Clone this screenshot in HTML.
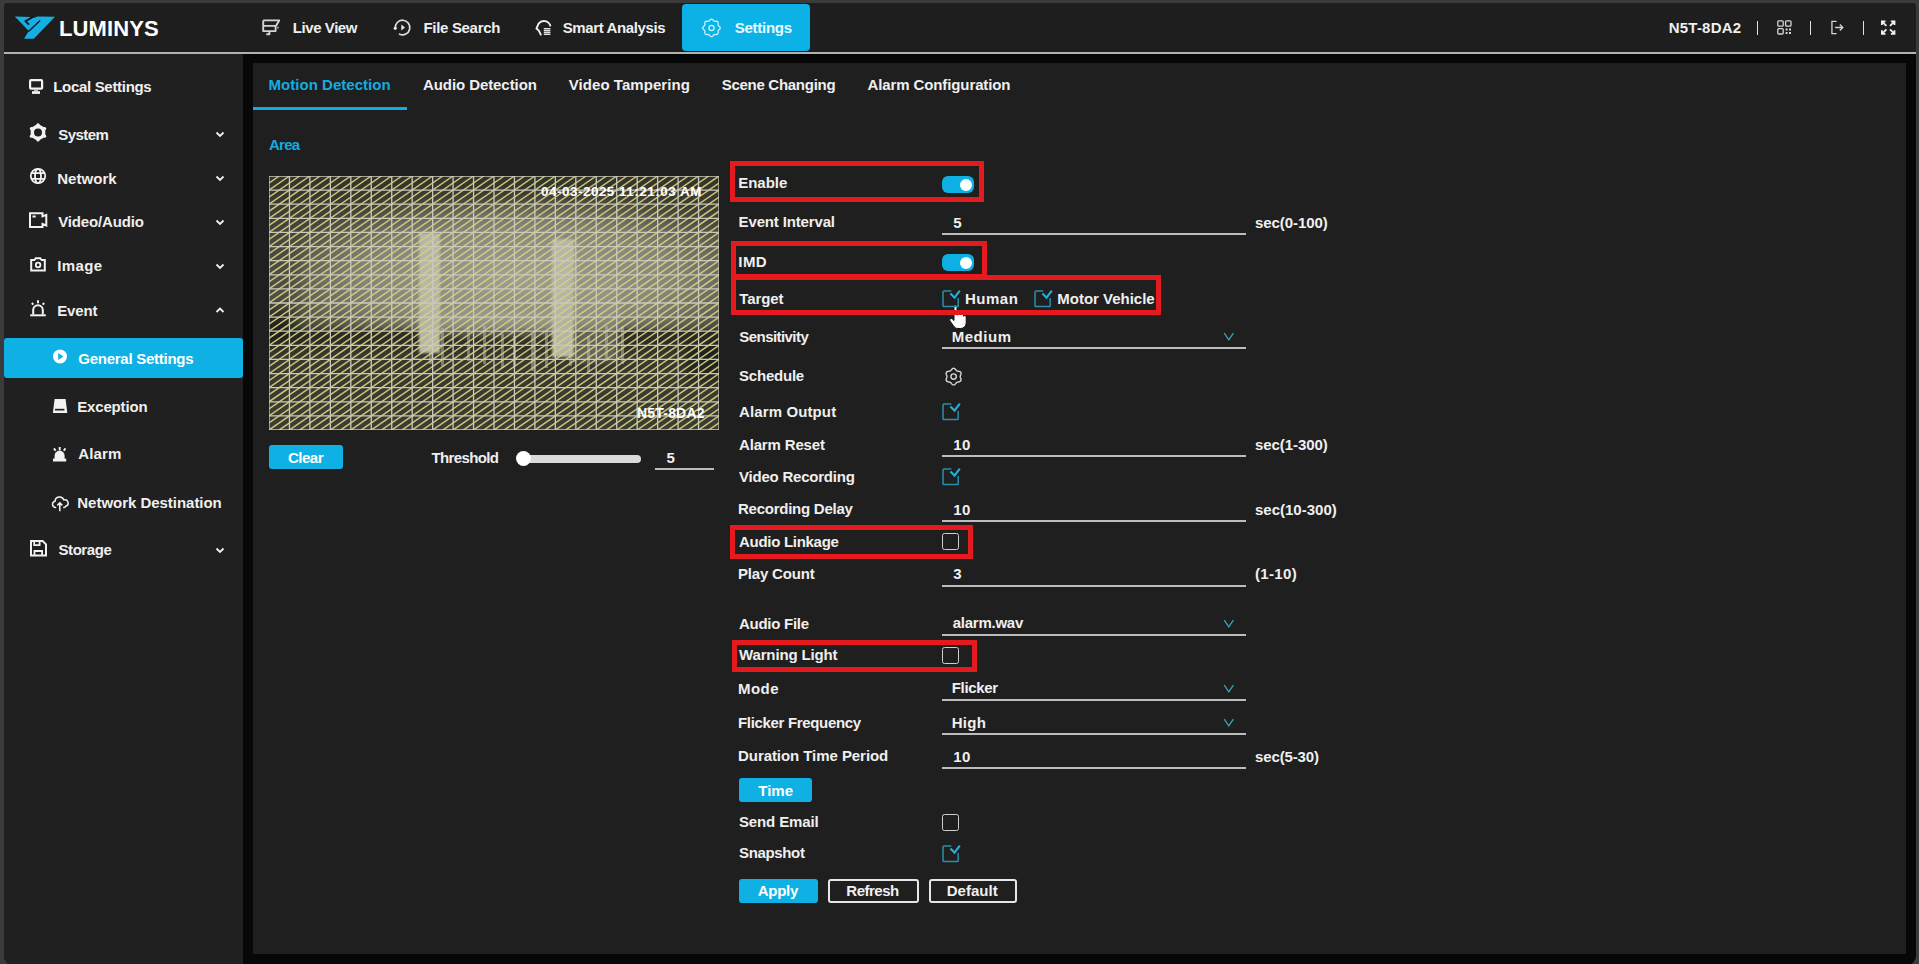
<!DOCTYPE html>
<html><head><meta charset="utf-8"><title>Settings</title>
<style>
html,body{margin:0;padding:0;}
body{width:1919px;height:964px;overflow:hidden;position:relative;background:#3b3b3b;font-family:"Liberation Sans",sans-serif;font-weight:bold;}
.a{position:absolute;box-sizing:border-box;}
.t{position:absolute;white-space:nowrap;font-weight:bold;}
.frame{left:4px;top:2.5px;width:1912px;height:962.5px;background:#070707;border-radius:4px 4px 9px 9px;overflow:hidden;}
.hdr{left:4px;top:2.5px;width:1912px;height:49.5px;background:#1e1e1e;border-radius:4px 4px 0 0;}
.hline{left:4px;top:52px;width:1912px;height:2px;background:#b2b2b2;}
.side{left:4px;top:54px;width:239px;height:911px;background:#202020;border-radius:0 0 0 9px;}
.panel{left:253px;top:62.5px;width:1653px;height:891.5px;background:#1f1f1f;}
.red{border:5.2px solid #e51a1e;}
.uline{height:2px;background:#bdbdbd;}
.cb{width:16.5px;height:16.5px;border:1.6px solid #cfcfcf;border-radius:2.5px;}
.btn{background:#0fb1e4;border-radius:3px;}
.obtn{border:2px solid #e6e6e6;border-radius:3px;}
.tog{width:32px;height:17px;border-radius:6px;background:#0db0e3;}
.tog:after{content:"";position:absolute;right:2px;top:2.5px;width:12px;height:12px;border-radius:50%;background:#fbffff;}
svg{position:absolute;overflow:visible;}
</style></head><body>
<div class="a frame"></div>
<div class="a hdr"></div>
<div class="a hline"></div>
<div class="a side"></div>
<div class="a panel"></div>
<!-- logo -->
<svg style="left:0;top:0" width="60" height="45" viewBox="0 0 60 45">
<polygon points="14.8,16.4 31.6,17.0 33.6,18.0 37.5,16.4 55,16.7 33.8,38.8 24.1,38.8 28.8,31.0" fill="#15b0e3"/>
<polyline points="33.3,16.6 25.6,21.3 28.9,24.6" stroke="#0c1a22" stroke-width="1.9" fill="none"/>
<polyline points="40.2,20.5 28.2,31.8" stroke="#0a1e2a" stroke-width="1.5" fill="none"/>
</svg>
<!-- settings button -->
<div class="a btn" style="left:682px;top:4px;width:128px;height:47px;border-radius:4px;background:#0cb2e5"></div>
<!-- header icons -->
<svg style="left:0;top:0" width="600" height="50" viewBox="0 0 600 50" fill="none">
<path d="M263.2 20.4H279.2L275.9 25.9H263.2M263.2 20.4V31.1H275.6V25.9M269.4 31.1V34.2H266.3" stroke="#d4d4d4" stroke-width="1.9" stroke-linejoin="round"/>
<circle cx="278" cy="27.7" r="1.1" fill="#8a8a8a"/>
<path d="M395.3 28.4A7.3 7.3 0 1 1 399.6 34.2" stroke="#dedede" stroke-width="1.7" stroke-linecap="round"/>
<circle cx="395.2" cy="28.3" r="1.5" fill="#f0f0f0"/>
<path d="M401.3 24.6V30.6L405 27.6z" fill="#e6e6e6"/>
<path d="M540.8 34.6L538.8 30.6 536.4 28.6 538.6 23.6A6.8 6.8 0 0 1 550.3 25.6" stroke="#f0f0f0" stroke-width="1.9" stroke-linejoin="round" stroke-linecap="round"/>
<path d="M543.8 28.7h6.6M543.8 30.6h6.6M543.8 32.4h6.6M543.8 34.2h6.6" stroke="#e2e2e2" stroke-width="1.4"/>
</svg>
<svg style="left:0;top:0" width="800" height="50" viewBox="0 0 800 50" fill="none" stroke="#c6f2ff">
<path d="M711.50,19.15 L712.07,19.27 L712.59,19.60 L713.06,20.05 L713.47,20.53 L713.86,20.94 L714.27,21.20 L714.75,21.31 L715.31,21.30 L715.94,21.25 L716.60,21.26 L717.20,21.40 L717.69,21.71 L718.00,22.20 L718.14,22.80 L718.15,23.46 L718.10,24.09 L718.09,24.65 L718.20,25.13 L718.46,25.54 L718.87,25.93 L719.35,26.34 L719.80,26.81 L720.13,27.33 L720.25,27.90 L720.13,28.47 L719.80,28.99 L719.35,29.46 L718.87,29.87 L718.46,30.26 L718.20,30.67 L718.09,31.15 L718.10,31.71 L718.15,32.34 L718.14,33.00 L718.00,33.60 L717.69,34.09 L717.20,34.40 L716.60,34.54 L715.94,34.55 L715.31,34.50 L714.75,34.49 L714.27,34.60 L713.86,34.86 L713.47,35.27 L713.06,35.75 L712.59,36.20 L712.07,36.53 L711.50,36.65 L710.93,36.53 L710.41,36.20 L709.94,35.75 L709.53,35.27 L709.14,34.86 L708.73,34.60 L708.25,34.49 L707.69,34.50 L707.06,34.55 L706.40,34.54 L705.80,34.40 L705.31,34.09 L705.00,33.60 L704.86,33.00 L704.85,32.34 L704.90,31.71 L704.91,31.15 L704.80,30.67 L704.54,30.26 L704.13,29.87 L703.65,29.46 L703.20,28.99 L702.87,28.47 L702.75,27.90 L702.87,27.33 L703.20,26.81 L703.65,26.34 L704.13,25.93 L704.54,25.54 L704.80,25.13 L704.91,24.65 L704.90,24.09 L704.85,23.46 L704.86,22.80 L705.00,22.20 L705.31,21.71 L705.80,21.40 L706.40,21.26 L707.06,21.25 L707.69,21.30 L708.25,21.31 L708.73,21.20 L709.14,20.94 L709.53,20.53 L709.94,20.05 L710.41,19.60 L710.93,19.27z" stroke-width="1.3"/>
<circle cx="711.5" cy="27.9" r="2.6" stroke-width="1.3"/>
</svg>
<div class="a" style="left:1757.2px;top:21px;width:1.3px;height:14px;background:#e0e0e0"></div>
<div class="a" style="left:1810.2px;top:21px;width:1.3px;height:14px;background:#e0e0e0"></div>
<div class="a" style="left:1863.2px;top:21px;width:1.3px;height:14px;background:#e0e0e0"></div>
<svg style="left:1777px;top:20px" width="15" height="15" viewBox="0 0 15 15" fill="none" stroke="#d6d6d6" stroke-width="1.3">
<rect x="0.8" y="0.8" width="5.4" height="5.4" rx="1"/><rect x="8.6" y="0.8" width="5.4" height="5.4" rx="1"/><rect x="0.8" y="8.6" width="5.4" height="5.4" rx="1"/>
<path d="M8.6 8.6h2v2h-2zM12 8.6h2v2h-2zM8.6 12h2v2h-2zM12 12h2v2h-2z" fill="#d6d6d6" stroke="none"/>
</svg>
<svg style="left:1831px;top:20px" width="13" height="15" viewBox="0 0 14 15" fill="none" stroke="#d6d6d6" stroke-width="1.4">
<path d="M6 1H1v13h5"/><path d="M4.5 7.5h8M9.5 4.3l3.2 3.2-3.2 3.2"/>
</svg>
<svg style="left:1880.8px;top:19.8px" width="14.4" height="15.2" viewBox="0 0 16 16" fill="none" stroke="#f0f0f0" stroke-width="2">
<path d="M1 5V1h4M1 1l5 5M15 5V1h-4M15 1l-5 5M1 11v4h4M1 15l5-5M15 11v4h-4M15 15l-5-5"/>
</svg>
<!-- sidebar -->
<div class="a btn" style="left:4px;top:338px;width:239px;height:40px;border-radius:3px;background:#0fb1e4"></div>
<svg style="left:0;top:0" width="80" height="600" viewBox="0 0 80 600">
<rect x="30.1" y="80.1" width="12" height="8.6" rx="1" fill="none" stroke="#f2f2f2" stroke-width="2.2"/>
<rect x="34" y="89.5" width="4" height="2" fill="#bdbdbd"/><rect x="32" y="91.2" width="8" height="2.7" fill="#f2f2f2"/>
<path fill-rule="evenodd" fill="#f2f2f2" d="M38 123.8l7.3 4.2v8.8l-7.3 4.2-7.3-4.2v-8.8z M42 132.4A4 4 0 1 0 34 132.4A4 4 0 1 0 42 132.4z"/>
<circle cx="38" cy="124.8" r="1.6" fill="#f2f2f2"/><circle cx="38" cy="140" r="1.6" fill="#f2f2f2"/>
<circle cx="44.6" cy="128.6" r="1.6" fill="#f2f2f2"/><circle cx="44.6" cy="136.2" r="1.6" fill="#f2f2f2"/>
<circle cx="31.4" cy="128.6" r="1.6" fill="#f2f2f2"/><circle cx="31.4" cy="136.2" r="1.6" fill="#f2f2f2"/>
<g fill="none" stroke="#f2f2f2" stroke-width="1.8"><circle cx="38" cy="176" r="7.2"/><ellipse cx="38" cy="176" rx="3" ry="7.2"/><path d="M31 173.2h14M31 178.8h14"/></g>
<path d="M30 213.2h12.5v3.2l3.8-1.5v10.6l-3.8-1.5v2.9H30z" fill="none" stroke="#f2f2f2" stroke-width="2"/>
<rect x="32.5" y="215.5" width="3.2" height="2" fill="#f2f2f2"/>
<path d="M31.2 260h3.2l1.4-1.8h4.4l1.4 1.8h3.2v10.6H31.2z" fill="none" stroke="#f2f2f2" stroke-width="2"/>
<circle cx="38.1" cy="265" r="2.3" fill="none" stroke="#f2f2f2" stroke-width="1.8"/>
<g fill="none" stroke="#f2f2f2" stroke-width="2"><path d="M33.2 314.5v-4.5a4.8 4.8 0 0 1 9.6 0v4.5"/><path d="M30.2 315.3h15.6"/><path d="M38 300.2v3M31.8 303l1.5 1.6M44.2 303l-1.5 1.6"/></g>
<path d="M60 356.5m-7 0a7 7 0 1 0 14 0a7 7 0 1 0 -14 0" fill="#ffffff"/><path d="M58.2 353v7l5.2-3.5z" fill="#0fb1e4"/>
<path d="M54.6 399h11l1.7 14H52.9z" fill="#f2f2f2"/><rect x="55" y="408.8" width="9.4" height="1.7" fill="#202020"/>
<path d="M54.6 459v-3.2a5 5 0 0 1 10 0V459z" fill="#f2f2f2"/><rect x="53" y="458.6" width="13.2" height="2.9" fill="#f2f2f2"/>
<g stroke="#f2f2f2" stroke-width="1.9" fill="none"><path d="M59.7 447v3.4M54 448.4l1.6 2.3M65.4 448.4l-1.6 2.3"/></g>
<g fill="none" stroke="#f2f2f2" stroke-width="1.5"><path d="M56.2 507.5h-.8a3.2 3.2 0 0 1-.4-6.3 4.6 4.6 0 0 1 8.9-1.3 3.1 3.1 0 0 1 1.8 6.3 2.3 2.3 0 0 1-1.7 1.3h-.8"/><path d="M59.8 511.2V503M57.3 505.4l2.5-2.5 2.5 2.5"/></g>
<path d="M31 541h11.6l3.4 3.4V555.5H31z" fill="none" stroke="#f2f2f2" stroke-width="2"/>
<path d="M34.2 541v4.2h5.4V541M34.5 555.5v-4.5h7.6v4.5" fill="none" stroke="#f2f2f2" stroke-width="1.8"/>
</svg>
<svg style="left:215px;top:131px" width="10" height="7" viewBox="0 0 10 7" fill="none" stroke="#f0f0f0" stroke-width="1.8"><path d="M1.5 1.5l3.5 3.5 3.5-3.5"/></svg>
<svg style="left:215px;top:175px" width="10" height="7" viewBox="0 0 10 7" fill="none" stroke="#f0f0f0" stroke-width="1.8"><path d="M1.5 1.5l3.5 3.5 3.5-3.5"/></svg>
<svg style="left:215px;top:219px" width="10" height="7" viewBox="0 0 10 7" fill="none" stroke="#f0f0f0" stroke-width="1.8"><path d="M1.5 1.5l3.5 3.5 3.5-3.5"/></svg>
<svg style="left:215px;top:263px" width="10" height="7" viewBox="0 0 10 7" fill="none" stroke="#f0f0f0" stroke-width="1.8"><path d="M1.5 1.5l3.5 3.5 3.5-3.5"/></svg>
<svg style="left:215px;top:307px" width="10" height="7" viewBox="0 0 10 7" fill="none" stroke="#f0f0f0" stroke-width="1.8"><path d="M1.5 5l3.5-3.5 3.5 3.5"/></svg>
<svg style="left:215px;top:547px" width="10" height="7" viewBox="0 0 10 7" fill="none" stroke="#f0f0f0" stroke-width="1.8"><path d="M1.5 1.5l3.5 3.5 3.5-3.5"/></svg>
<!-- tabs -->
<div class="a" style="left:253px;top:107px;width:154px;height:3px;background:#14ace0"></div>
<!-- camera image -->
<div class="a" style="left:269px;top:176px;width:450px;height:254px;overflow:hidden;background:#34342f">
 <div class="a" style="left:-30px;top:-30px;width:510px;height:314px;filter:blur(7px)">
  <div class="a" style="left:0;top:0;width:510px;height:314px;background:linear-gradient(to bottom,#2c2c28 0%,#36362f 14%,#46463f 28%,#50504a 50%,#50504a 56%,#36362f 59%,#3a3a33 80%,#3d3d36 100%)"></div>
  <div class="a" style="left:60px;top:55px;width:440px;height:130px;background:radial-gradient(ellipse at 50% 58%,rgba(160,160,150,1),rgba(140,140,130,0.88) 50%,rgba(110,110,100,0) 82%)"></div>
  <div class="a" style="left:5px;top:162px;width:50px;height:32px;background:rgba(8,8,6,0.55)"></div>
  <div class="a" style="left:448px;top:195px;width:50px;height:40px;background:rgba(8,8,6,0.45)"></div>
 </div>
 <div class="a" style="left:0;top:154px;width:450px;height:24px;background:linear-gradient(to bottom,rgba(30,30,26,0.75),rgba(30,30,26,0));filter:blur(1px)"></div>
 <div class="a" style="left:150px;top:57px;width:21px;height:120px;background:#b6b6aa;filter:blur(1.2px)"></div>
 <div class="a" style="left:283px;top:63px;width:22px;height:118px;background:#b6b6aa;filter:blur(1.2px)"></div>
 <div class="a" style="left:305px;top:100px;width:45px;height:85px;background:rgba(150,150,140,0.5);filter:blur(3px)"></div>
 <div class="a" style="left:150px;top:135px;width:150px;height:25px;background:rgba(175,175,165,0.4);filter:blur(3px)"></div>
 <div class="a" style="left:160px;top:150px;width:2.5px;height:38px;background:#c0c0b4;opacity:0.5"></div><div class="a" style="left:172px;top:152px;width:2.5px;height:38px;background:#c0c0b4;opacity:0.5"></div><div class="a" style="left:198px;top:150px;width:2.5px;height:35px;background:#c0c0b4;opacity:0.5"></div><div class="a" style="left:214px;top:150px;width:2.5px;height:38px;background:#c0c0b4;opacity:0.5"></div><div class="a" style="left:232px;top:158px;width:2.5px;height:34px;background:#c0c0b4;opacity:0.5"></div><div class="a" style="left:244px;top:160px;width:2.5px;height:30px;background:#c0c0b4;opacity:0.5"></div><div class="a" style="left:262px;top:158px;width:2.5px;height:37px;background:#c0c0b4;opacity:0.5"></div><div class="a" style="left:276px;top:155px;width:2.5px;height:37px;background:#c0c0b4;opacity:0.5"></div><div class="a" style="left:300px;top:150px;width:2.5px;height:40px;background:#c0c0b4;opacity:0.5"></div><div class="a" style="left:318px;top:160px;width:2.5px;height:36px;background:#c0c0b4;opacity:0.5"></div><div class="a" style="left:336px;top:150px;width:2.5px;height:35px;background:#c0c0b4;opacity:0.5"></div><div class="a" style="left:352px;top:150px;width:2.5px;height:38px;background:#c0c0b4;opacity:0.5"></div>
 <svg style="left:0;top:0" width="450" height="254" viewBox="0 0 450 254">
  <path d="M0.00 0.00L0.00 0.00M0.00 7.06L10.23 0.00M0.00 14.11L20.45 0.00M0.00 21.17L30.68 0.00M0.00 28.22L40.91 0.00M0.00 35.28L51.14 0.00M0.00 42.33L61.36 0.00M0.00 49.39L71.59 0.00M0.00 56.44L81.82 0.00M0.00 63.50L92.05 0.00M0.00 70.56L102.27 0.00M0.00 77.61L112.50 0.00M0.00 84.67L122.73 0.00M0.00 91.72L132.95 0.00M0.00 98.78L143.18 0.00M0.00 105.83L153.41 0.00M0.00 112.89L163.64 0.00M0.00 119.94L173.86 0.00M0.00 127.00L184.09 0.00M0.00 134.06L194.32 0.00M0.00 141.11L204.55 0.00M0.00 148.17L214.77 0.00M0.00 155.22L225.00 0.00M0.00 162.28L235.23 0.00M0.00 169.33L245.45 0.00M0.00 176.39L255.68 0.00M0.00 183.44L265.91 0.00M0.00 190.50L276.14 0.00M0.00 197.56L286.36 0.00M0.00 204.61L296.59 0.00M0.00 211.67L306.82 0.00M0.00 218.72L317.05 0.00M0.00 225.78L327.27 0.00M0.00 232.83L337.50 0.00M0.00 239.89L347.73 0.00M0.00 246.94L357.95 0.00M0.00 254.00L368.18 0.00M0.00 261.06L378.41 0.00M0.00 268.11L388.64 0.00M0.00 275.17L398.86 0.00M0.00 282.22L409.09 0.00M0.00 289.28L419.32 0.00M0.00 296.33L429.55 0.00M0.00 303.39L439.77 0.00M0.00 310.44L450.00 0.00M0.00 317.50L460.23 0.00M0.00 324.56L470.45 0.00M0.00 331.61L480.68 0.00M0.00 338.67L490.91 0.00M0.00 345.72L501.14 0.00M0.00 352.78L511.36 0.00M0.00 359.83L521.59 0.00M0.00 366.89L531.82 0.00M0.00 373.94L542.05 0.00M0.00 381.00L552.27 0.00M0.00 388.06L562.50 0.00M0.00 395.11L572.73 0.00M0.00 402.17L582.95 0.00M0.00 409.22L593.18 0.00M0.00 416.28L603.41 0.00M0.00 423.33L613.64 0.00M0.00 430.39L623.86 0.00M0.00 437.44L634.09 0.00M0.00 444.50L644.32 0.00M0.00 451.56L654.55 0.00M0.00 458.61L664.77 0.00M0.00 465.67L675.00 0.00M0.00 472.72L685.23 0.00M0.00 479.78L695.45 0.00M0.00 486.83L705.68 0.00M0.00 493.89L715.91 0.00M0.00 500.94L726.14 0.00M0.00 508.00L736.36 0.00M0.00 515.06L746.59 0.00M0.00 522.11L756.82 0.00M0.00 529.17L767.05 0.00M0.00 536.22L777.27 0.00M0.00 543.28L787.50 0.00M0.00 550.33L797.73 0.00M0.00 557.39L807.95 0.00M0.00 564.44L818.18 0.00" stroke="#d6d27c" stroke-width="1.5" fill="none" opacity="0.92"/>
  <path d="M0.00 0V254M20.45 0V254M40.91 0V254M61.36 0V254M81.82 0V254M102.27 0V254M122.73 0V254M143.18 0V254M163.64 0V254M184.09 0V254M204.55 0V254M225.00 0V254M245.45 0V254M265.91 0V254M286.36 0V254M306.82 0V254M327.27 0V254M347.73 0V254M368.18 0V254M388.64 0V254M409.09 0V254M429.55 0V254M450.00 0V254M0 0.00H450M0 14.11H450M0 28.22H450M0 42.33H450M0 56.44H450M0 70.56H450M0 84.67H450M0 98.78H450M0 112.89H450M0 127.00H450M0 141.11H450M0 155.22H450M0 169.33H450M0 183.44H450M0 197.56H450M0 211.67H450M0 225.78H450M0 239.89H450M0 254.00H450" stroke="#cacabc" stroke-width="1.3" fill="none"/>
 </svg>
 <div class="t" style="left:272px;top:7px;font-size:13.5px;line-height:18px;color:#ffffff;font-weight:bold;letter-spacing:0.48px">04-03-2025 11:21:03 AM</div>
 <div class="t" style="left:368px;top:228px;font-size:14px;line-height:18px;color:#ffffff;font-weight:bold;letter-spacing:0.2px">N5T-8DA2</div>
</div>
<div class="a btn" style="left:269px;top:445px;width:74px;height:24px;border-radius:3px"></div>
<div class="a" style="left:517px;top:454.5px;width:124px;height:8px;border-radius:4px;background:#dadada"></div>
<div class="a" style="left:516px;top:451px;width:15px;height:15px;border-radius:50%;background:#ffffff"></div>
<div class="a uline" style="left:655px;top:468px;width:59px"></div>
<!-- cursor -->
<svg style="left:948px;top:304px" width="20" height="26" viewBox="0 0 20 26">
<path d="M6 2.5a1.5 1.5 0 0 1 3 0V11l1-.2V9.5a1.4 1.4 0 0 1 2.8 0v1.5a1.4 1.4 0 0 1 2.8 0v1.3a1.4 1.4 0 0 1 2.6.4V19c0 3-2.5 5.5-5.5 5.5H10c-2 0-3.2-1-4.5-2.6L1.8 16.7a1.6 1.6 0 0 1 2.3-2L6 16.5z" fill="#ffffff" stroke="#111" stroke-width="1"/>
</svg>
<!-- red boxes -->
<div class="a red" style="left:730px;top:161px;width:254px;height:41px"></div>
<div class="a red" style="left:730.5px;top:240.7px;width:256.3px;height:38.5px"></div>
<div class="a red" style="left:731px;top:275.3px;width:430px;height:40px"></div>
<div class="a red" style="left:730px;top:525px;width:243.4px;height:33.5px"></div>
<div class="a red" style="left:731.5px;top:639.7px;width:245px;height:32px"></div>
<!-- toggles -->
<div class="a tog" style="left:942px;top:176px"></div>
<div class="a tog" style="left:942px;top:254px"></div>
<!-- underlines -->
<div class="a uline" style="left:942px;top:233px;width:304px"></div>
<div class="a uline" style="left:942px;top:347px;width:304px"></div>
<div class="a uline" style="left:942px;top:455px;width:304px"></div>
<div class="a uline" style="left:942px;top:520px;width:304px"></div>
<div class="a uline" style="left:942px;top:585px;width:304px"></div>
<div class="a uline" style="left:942px;top:634px;width:304px"></div>
<div class="a uline" style="left:942px;top:699px;width:304px"></div>
<div class="a uline" style="left:942px;top:733px;width:304px"></div>
<div class="a uline" style="left:942px;top:767px;width:304px"></div>
<!-- chevrons -->
<svg style="left:1223px;top:331.5px" width="12" height="9" viewBox="0 0 12 9" fill="none" stroke="#3b9fb6" stroke-width="1.4"><path d="M1.2 1.2l4.6 6.6 4.6-6.6"/></svg>
<svg style="left:1223px;top:618.5px" width="12" height="9" viewBox="0 0 12 9" fill="none" stroke="#3b9fb6" stroke-width="1.4"><path d="M1.2 1.2l4.6 6.6 4.6-6.6"/></svg>
<svg style="left:1223px;top:683.5px" width="12" height="9" viewBox="0 0 12 9" fill="none" stroke="#3b9fb6" stroke-width="1.4"><path d="M1.2 1.2l4.6 6.6 4.6-6.6"/></svg>
<svg style="left:1223px;top:717.5px" width="12" height="9" viewBox="0 0 12 9" fill="none" stroke="#3b9fb6" stroke-width="1.4"><path d="M1.2 1.2l4.6 6.6 4.6-6.6"/></svg>
<!-- checked boxes -->
<svg style="left:942px;top:290px" width="19" height="17" viewBox="0 0 19 17" fill="none"><path d="M9.3 1H2.2A1.2 1.2 0 0 0 1 2.2v13.6a.8.8 0 0 0 .8.8h13.6a.8.8 0 0 0 .8-.8V8" stroke="#2a90ac" stroke-width="1.5"/><path d="M8.4 3.6l4.1 4 5.3-7" stroke="#26afd9" stroke-width="2.1"/></svg>
<svg style="left:1034px;top:290px" width="19" height="17" viewBox="0 0 19 17" fill="none"><path d="M9.3 1H2.2A1.2 1.2 0 0 0 1 2.2v13.6a.8.8 0 0 0 .8.8h13.6a.8.8 0 0 0 .8-.8V8" stroke="#2a90ac" stroke-width="1.5"/><path d="M8.4 3.6l4.1 4 5.3-7" stroke="#26afd9" stroke-width="2.1"/></svg>
<svg style="left:942px;top:403px" width="19" height="17" viewBox="0 0 19 17" fill="none"><path d="M9.3 1H2.2A1.2 1.2 0 0 0 1 2.2v13.6a.8.8 0 0 0 .8.8h13.6a.8.8 0 0 0 .8-.8V8" stroke="#2a90ac" stroke-width="1.5"/><path d="M8.4 3.6l4.1 4 5.3-7" stroke="#26afd9" stroke-width="2.1"/></svg>
<svg style="left:942px;top:468px" width="19" height="17" viewBox="0 0 19 17" fill="none"><path d="M9.3 1H2.2A1.2 1.2 0 0 0 1 2.2v13.6a.8.8 0 0 0 .8.8h13.6a.8.8 0 0 0 .8-.8V8" stroke="#2a90ac" stroke-width="1.5"/><path d="M8.4 3.6l4.1 4 5.3-7" stroke="#26afd9" stroke-width="2.1"/></svg>
<svg style="left:942px;top:845px" width="19" height="17" viewBox="0 0 19 17" fill="none"><path d="M9.3 1H2.2A1.2 1.2 0 0 0 1 2.2v13.6a.8.8 0 0 0 .8.8h13.6a.8.8 0 0 0 .8-.8V8" stroke="#2a90ac" stroke-width="1.5"/><path d="M8.4 3.6l4.1 4 5.3-7" stroke="#26afd9" stroke-width="2.1"/></svg>
<!-- empty boxes -->
<div class="a cb" style="left:942px;top:533px"></div>
<div class="a cb" style="left:942px;top:647px"></div>
<div class="a cb" style="left:942px;top:814px"></div>
<!-- schedule gear -->
<svg style="left:0;top:0" width="1000" height="400" viewBox="0 0 1000 400" fill="none" stroke="#d6d6d6">
<path d="M953.60,368.30 L954.14,368.38 L954.65,368.62 L955.12,368.97 L955.53,369.40 L955.89,369.85 L956.22,370.27 L956.55,370.62 L956.90,370.88 L957.30,371.06 L957.77,371.17 L958.30,371.24 L958.87,371.33 L959.45,371.47 L959.99,371.70 L960.45,372.02 L960.79,372.45 L960.99,372.96 L961.04,373.52 L960.96,374.10 L960.80,374.67 L960.59,375.21 L960.39,375.71 L960.25,376.16 L960.20,376.60 L960.25,377.04 L960.39,377.49 L960.59,377.99 L960.80,378.53 L960.96,379.10 L961.04,379.68 L960.99,380.24 L960.79,380.75 L960.45,381.18 L959.99,381.50 L959.45,381.73 L958.87,381.87 L958.30,381.96 L957.77,382.03 L957.30,382.14 L956.90,382.32 L956.55,382.58 L956.22,382.93 L955.89,383.35 L955.53,383.80 L955.12,384.23 L954.65,384.58 L954.14,384.82 L953.60,384.90 L953.06,384.82 L952.55,384.58 L952.08,384.23 L951.67,383.80 L951.31,383.35 L950.98,382.93 L950.65,382.58 L950.30,382.32 L949.90,382.14 L949.43,382.03 L948.90,381.96 L948.33,381.87 L947.75,381.73 L947.21,381.50 L946.75,381.18 L946.41,380.75 L946.21,380.24 L946.16,379.68 L946.24,379.10 L946.40,378.53 L946.61,377.99 L946.81,377.49 L946.95,377.04 L947.00,376.60 L946.95,376.16 L946.81,375.71 L946.61,375.21 L946.40,374.67 L946.24,374.10 L946.16,373.52 L946.21,372.96 L946.41,372.45 L946.75,372.02 L947.21,371.70 L947.75,371.47 L948.33,371.33 L948.90,371.24 L949.43,371.17 L949.90,371.06 L950.30,370.88 L950.65,370.62 L950.98,370.27 L951.31,369.85 L951.67,369.40 L952.08,368.97 L952.55,368.62 L953.06,368.38z" stroke-width="1.4"/>
<circle cx="953.6" cy="376.6" r="2.7" stroke-width="1.4"/>
</svg>
<!-- buttons -->
<div class="a btn" style="left:739px;top:778px;width:73px;height:24px"></div>
<div class="a btn" style="left:739px;top:879px;width:79px;height:24px"></div>
<div class="a obtn" style="left:828px;top:879px;width:91px;height:24px"></div>
<div class="a obtn" style="left:929px;top:879px;width:88px;height:24px"></div>
<div class="t" style="left:292.8px;top:17.6px;font-size:15px;line-height:20px;letter-spacing:-0.43px;color:#efefef">Live View</div>
<div class="t" style="left:423.5px;top:17.6px;font-size:15px;line-height:20px;letter-spacing:-0.32px;color:#efefef">File Search</div>
<div class="t" style="left:562.7px;top:17.6px;font-size:15px;line-height:20px;letter-spacing:-0.37px;color:#efefef">Smart Analysis</div>
<div class="t" style="left:734.7px;top:17.6px;font-size:15px;line-height:20px;letter-spacing:-0.26px;color:#e6fbff">Settings</div>
<div class="t" style="left:1668.8px;top:18.0px;font-size:15px;line-height:20px;letter-spacing:0.20px;color:#efefef">N5T-8DA2</div>
<div class="t" style="left:59.0px;top:14.9px;font-size:22px;line-height:28px;letter-spacing:0.11px;color:#ffffff">LUMINYS</div>
<div class="t" style="left:53.2px;top:76.6px;font-size:15px;line-height:20px;letter-spacing:-0.31px;color:#efefef">Local Settings</div>
<div class="t" style="left:58.2px;top:124.8px;font-size:15px;line-height:20px;letter-spacing:-0.53px;color:#efefef">System</div>
<div class="t" style="left:57.2px;top:168.7px;font-size:15px;line-height:20px;letter-spacing:0.04px;color:#efefef">Network</div>
<div class="t" style="left:58.2px;top:212.2px;font-size:15px;line-height:20px;letter-spacing:-0.14px;color:#efefef">Video/Audio</div>
<div class="t" style="left:57.2px;top:256.0px;font-size:15px;line-height:20px;letter-spacing:0.40px;color:#efefef">Image</div>
<div class="t" style="left:57.2px;top:300.5px;font-size:15px;line-height:20px;letter-spacing:-0.16px;color:#efefef">Event</div>
<div class="t" style="left:78.3px;top:348.5px;font-size:15px;line-height:20px;letter-spacing:-0.26px;color:#ffffff">General Settings</div>
<div class="t" style="left:77.3px;top:396.6px;font-size:15px;line-height:20px;letter-spacing:-0.18px;color:#efefef">Exception</div>
<div class="t" style="left:78.3px;top:444.4px;font-size:15px;line-height:20px;letter-spacing:0.11px;color:#efefef">Alarm</div>
<div class="t" style="left:77.3px;top:492.5px;font-size:15px;line-height:20px;letter-spacing:-0.03px;color:#efefef">Network Destination</div>
<div class="t" style="left:58.5px;top:540.3px;font-size:15px;line-height:20px;letter-spacing:-0.43px;color:#efefef">Storage</div>
<div class="t" style="left:268.6px;top:75.0px;font-size:15px;line-height:20px;letter-spacing:0.02px;color:#14ace0">Motion Detection</div>
<div class="t" style="left:423.0px;top:75.0px;font-size:15px;line-height:20px;letter-spacing:-0.08px;color:#efefef">Audio Detection</div>
<div class="t" style="left:568.8px;top:75.0px;font-size:15px;line-height:20px;letter-spacing:0.05px;color:#efefef">Video Tampering</div>
<div class="t" style="left:721.7px;top:75.0px;font-size:15px;line-height:20px;letter-spacing:-0.28px;color:#efefef">Scene Changing</div>
<div class="t" style="left:867.5px;top:75.0px;font-size:15px;line-height:20px;letter-spacing:-0.11px;color:#efefef">Alarm Configuration</div>
<div class="t" style="left:269.0px;top:135.4px;font-size:15px;line-height:20px;letter-spacing:-0.74px;color:#14ace0">Area</div>
<div class="t" style="left:288.0px;top:447.7px;font-size:15px;line-height:20px;letter-spacing:-0.50px;color:#ffffff">Clear</div>
<div class="t" style="left:431.4px;top:447.5px;font-size:15px;line-height:20px;letter-spacing:-0.62px;color:#efefef">Threshold</div>
<div class="t" style="left:666.6px;top:447.7px;font-size:15px;line-height:20px;letter-spacing:0.00px;color:#efefef">5</div>
<div class="t" style="left:738.3px;top:173.3px;font-size:15px;line-height:20px;letter-spacing:-0.05px;color:#efefef">Enable</div>
<div class="t" style="left:738.6px;top:212.2px;font-size:15px;line-height:20px;letter-spacing:-0.15px;color:#efefef">Event Interval</div>
<div class="t" style="left:738.3px;top:251.8px;font-size:15px;line-height:20px;letter-spacing:0.42px;color:#efefef">IMD</div>
<div class="t" style="left:739.3px;top:288.7px;font-size:15px;line-height:20px;letter-spacing:-0.09px;color:#efefef">Target</div>
<div class="t" style="left:739.3px;top:326.8px;font-size:15px;line-height:20px;letter-spacing:-0.56px;color:#efefef">Sensitivity</div>
<div class="t" style="left:739.0px;top:365.8px;font-size:15px;line-height:20px;letter-spacing:-0.21px;color:#efefef">Schedule</div>
<div class="t" style="left:739.0px;top:401.9px;font-size:15px;line-height:20px;letter-spacing:0.12px;color:#efefef">Alarm Output</div>
<div class="t" style="left:739.0px;top:435.0px;font-size:15px;line-height:20px;letter-spacing:-0.16px;color:#efefef">Alarm Reset</div>
<div class="t" style="left:739.0px;top:466.9px;font-size:15px;line-height:20px;letter-spacing:-0.22px;color:#efefef">Video Recording</div>
<div class="t" style="left:738.0px;top:499.4px;font-size:15px;line-height:20px;letter-spacing:-0.25px;color:#efefef">Recording Delay</div>
<div class="t" style="left:739.0px;top:531.5px;font-size:15px;line-height:20px;letter-spacing:-0.29px;color:#efefef">Audio Linkage</div>
<div class="t" style="left:738.0px;top:564.4px;font-size:15px;line-height:20px;letter-spacing:-0.18px;color:#efefef">Play Count</div>
<div class="t" style="left:739.0px;top:613.6px;font-size:15px;line-height:20px;letter-spacing:-0.27px;color:#efefef">Audio File</div>
<div class="t" style="left:739.0px;top:645.4px;font-size:15px;line-height:20px;letter-spacing:-0.14px;color:#efefef">Warning Light</div>
<div class="t" style="left:738.0px;top:678.8px;font-size:15px;line-height:20px;letter-spacing:0.46px;color:#efefef">Mode</div>
<div class="t" style="left:738.0px;top:712.6px;font-size:15px;line-height:20px;letter-spacing:-0.33px;color:#efefef">Flicker Frequency</div>
<div class="t" style="left:738.0px;top:746.3px;font-size:15px;line-height:20px;letter-spacing:-0.06px;color:#efefef">Duration Time Period</div>
<div class="t" style="left:739.0px;top:812.2px;font-size:15px;line-height:20px;letter-spacing:-0.14px;color:#efefef">Send Email</div>
<div class="t" style="left:739.0px;top:843.4px;font-size:15px;line-height:20px;letter-spacing:-0.35px;color:#efefef">Snapshot</div>
<div class="t" style="left:965.0px;top:288.7px;font-size:15px;line-height:20px;letter-spacing:0.51px;color:#efefef">Human</div>
<div class="t" style="left:1057.3px;top:288.7px;font-size:15px;line-height:20px;letter-spacing:-0.01px;color:#efefef">Motor Vehicle</div>
<div class="t" style="left:953.3px;top:212.5px;font-size:15px;line-height:20px;letter-spacing:0.00px;color:#efefef">5</div>
<div class="t" style="left:951.7px;top:326.7px;font-size:15px;line-height:20px;letter-spacing:0.53px;color:#efefef">Medium</div>
<div class="t" style="left:953.3px;top:435.0px;font-size:15px;line-height:20px;letter-spacing:0.36px;color:#efefef">10</div>
<div class="t" style="left:953.3px;top:499.6px;font-size:15px;line-height:20px;letter-spacing:0.36px;color:#efefef">10</div>
<div class="t" style="left:953.3px;top:564.4px;font-size:15px;line-height:20px;letter-spacing:0.00px;color:#efefef">3</div>
<div class="t" style="left:952.7px;top:613.3px;font-size:15px;line-height:20px;letter-spacing:-0.24px;color:#efefef">alarm.wav</div>
<div class="t" style="left:951.7px;top:678.3px;font-size:15px;line-height:20px;letter-spacing:-0.32px;color:#efefef">Flicker</div>
<div class="t" style="left:951.7px;top:712.7px;font-size:15px;line-height:20px;letter-spacing:0.28px;color:#efefef">High</div>
<div class="t" style="left:953.3px;top:746.5px;font-size:15px;line-height:20px;letter-spacing:0.36px;color:#efefef">10</div>
<div class="t" style="left:1255.0px;top:212.7px;font-size:15px;line-height:20px;letter-spacing:-0.08px;color:#efefef">sec(0-100)</div>
<div class="t" style="left:1255.0px;top:435.0px;font-size:15px;line-height:20px;letter-spacing:-0.08px;color:#efefef">sec(1-300)</div>
<div class="t" style="left:1255.0px;top:500.0px;font-size:15px;line-height:20px;letter-spacing:-0.00px;color:#efefef">sec(10-300)</div>
<div class="t" style="left:1255.0px;top:564.3px;font-size:15px;line-height:20px;letter-spacing:0.34px;color:#efefef">(1-10)</div>
<div class="t" style="left:1255.0px;top:746.7px;font-size:15px;line-height:20px;letter-spacing:-0.13px;color:#efefef">sec(5-30)</div>
<div class="t" style="left:758.3px;top:780.7px;font-size:15px;line-height:20px;letter-spacing:0.00px;color:#ffffff">Time</div>
<div class="t" style="left:757.7px;top:881.0px;font-size:15px;line-height:20px;letter-spacing:-0.26px;color:#ffffff">Apply</div>
<div class="t" style="left:846.3px;top:881.0px;font-size:15px;line-height:20px;letter-spacing:-0.50px;color:#efefef">Refresh</div>
<div class="t" style="left:946.7px;top:881.0px;font-size:15px;line-height:20px;letter-spacing:0.03px;color:#efefef">Default</div>
</body></html>
